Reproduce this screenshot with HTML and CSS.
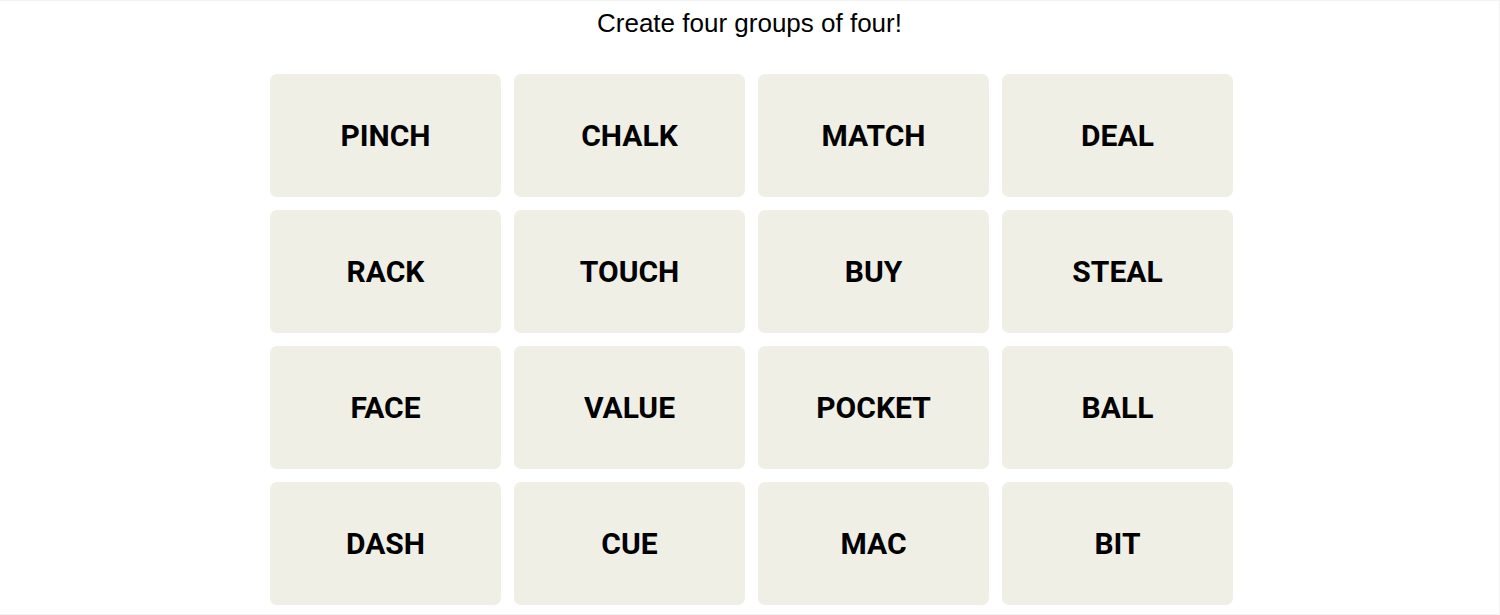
FILE: index.html
```html
<!DOCTYPE html>
<html lang="en">
<head>
<meta charset="utf-8">
<title>Connections</title>
<link rel="stylesheet" href="styles.css">
</head>
<body>
<main class="frame">
  <h1 class="prompt">Create four groups of four!</h1>
  <section class="board">
    <div class="tile">PINCH</div>
    <div class="tile">CHALK</div>
    <div class="tile">MATCH</div>
    <div class="tile">DEAL</div>
    <div class="tile">RACK</div>
    <div class="tile">TOUCH</div>
    <div class="tile">BUY</div>
    <div class="tile">STEAL</div>
    <div class="tile">FACE</div>
    <div class="tile">VALUE</div>
    <div class="tile">POCKET</div>
    <div class="tile">BALL</div>
    <div class="tile">DASH</div>
    <div class="tile">CUE</div>
    <div class="tile">MAC</div>
    <div class="tile">BIT</div>
  </section>
</main>
</body>
</html>
```

FILE: styles.css
```css
* { box-sizing: border-box; }

html, body {
  margin: 0;
  padding: 0;
  background: #ffffff;
}

.frame {
  width: 1500px;
  height: 615px;
  border-top: 1px solid #f2f2f2;
  border-right: 1px solid #f2f2f2;
  border-bottom: 1px solid #f2f2f2;
  overflow: hidden;
  font-family: "Liberation Sans", Arial, sans-serif;
  color: #000;
}

.prompt {
  margin: 0;
  padding-top: 7px;
  height: 73px;
  font-size: 26px;
  line-height: 30px;
  font-weight: 400;
  text-align: center;
}

.board {
  margin-left: 270px;
  width: 963px;
  display: grid;
  grid-template-columns: repeat(4, 231px);
  grid-auto-rows: 123px;
  column-gap: 13px;
  row-gap: 13px;
}

.tile {
  background: #efefe6;
  border-radius: 7px;
  display: flex;
  align-items: center;
  justify-content: center;
  font-family: Roboto, "Liberation Sans", Arial, sans-serif;
  font-size: 30px;
  font-weight: 700;
  padding-top: 0;
}
```
